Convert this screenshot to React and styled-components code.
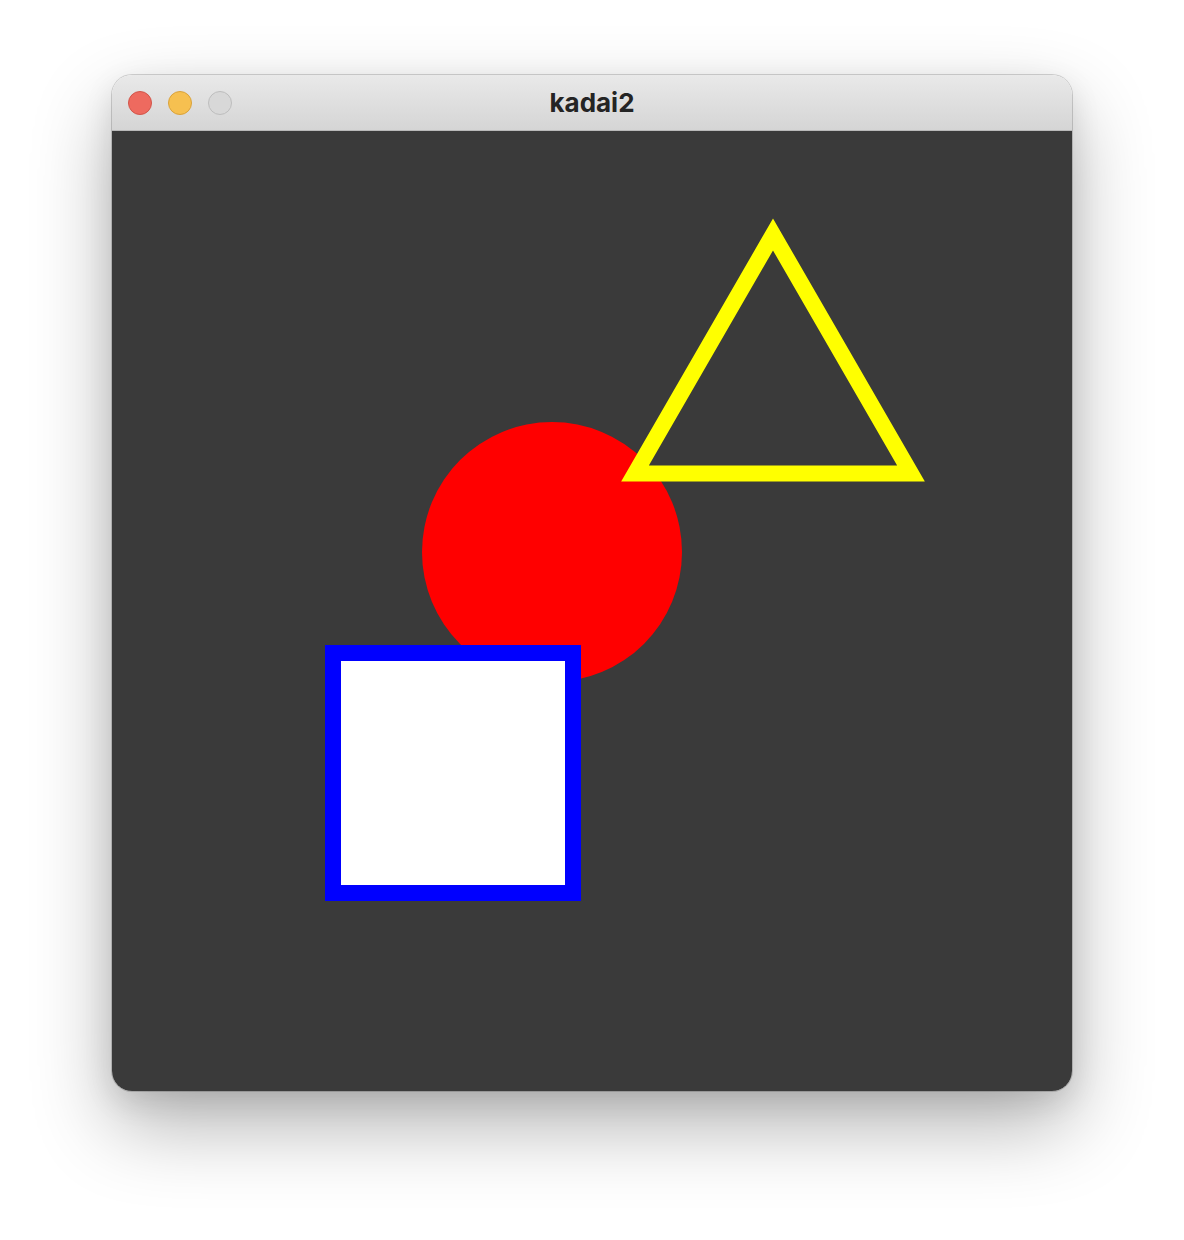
import styled, { createGlobalStyle } from "styled-components";

const GlobalStyle = createGlobalStyle`
  html, body {
    margin: 0;
    padding: 0;
    background: #ffffff;
  }
  body {
    font-family: Inter, "Liberation Sans", sans-serif;
  }
`;

const Page = styled.div`
  width: 1184px;
  height: 1240px;
  box-sizing: border-box;
  padding: 75px 112px 0;
  background: #ffffff;
`;

const Window = styled.div`
  width: 960px;
  display: flex;
  flex-direction: column;
  border-radius: 20px;
  overflow: hidden;
  box-shadow: 0 0 0 1px rgba(0, 0, 0, 0.16), 0 34px 80px rgba(0, 0, 0, 0.3),
    0 10px 30px rgba(0, 0, 0, 0.1);
`;

const TitleBar = styled.div`
  position: relative;
  height: 55px;
  display: flex;
  align-items: center;
  padding-left: 16px;
  gap: 16px;
  background: linear-gradient(#e9e9e9, #d5d5d5);
  border-bottom: 1px solid #b9b9b9;
`;

const Light = styled.span`
  width: 24px;
  height: 24px;
  box-sizing: border-box;
  border-radius: 50%;
  background: ${({ color }) => color};
  border: 1px solid ${({ edge }) => edge};
`;

const Title = styled.div`
  position: absolute;
  left: 0;
  right: 0;
  top: 0;
  bottom: 0;
  display: flex;
  align-items: center;
  justify-content: center;
  font-size: 26px;
  font-weight: 700;
  color: #242424;
  padding-bottom: 1px;
`;

const Canvas = styled.div`
  width: 960px;
  height: 960px;
  background: #3a3a3a;

  svg {
    display: block;
  }
`;

const App = () => {
  return (
    <Page>
      <GlobalStyle />
      <Window>
        <TitleBar>
          <Light color="#ee6a5f" edge="#d1554a" />
          <Light color="#f6c050" edge="#d9a23b" />
          <Light color="#d8d8d8" edge="#bdbdbd" />
          <Title>kadai2</Title>
        </TitleBar>
        <Canvas>
          <svg width="960" height="960" viewBox="0 0 960 960">
            <circle cx="440" cy="421" r="130" fill="#ff0000" />
            <polygon
              points="523,342.5 799,342.5 661,103.5"
              fill="none"
              stroke="#ffff00"
              strokeWidth="16"
              strokeLinejoin="miter"
            />
            <rect
              x="221"
              y="522"
              width="240"
              height="240"
              fill="#ffffff"
              stroke="#0000ff"
              strokeWidth="16"
            />
          </svg>
        </Canvas>
      </Window>
    </Page>
  );
};

export default App;
